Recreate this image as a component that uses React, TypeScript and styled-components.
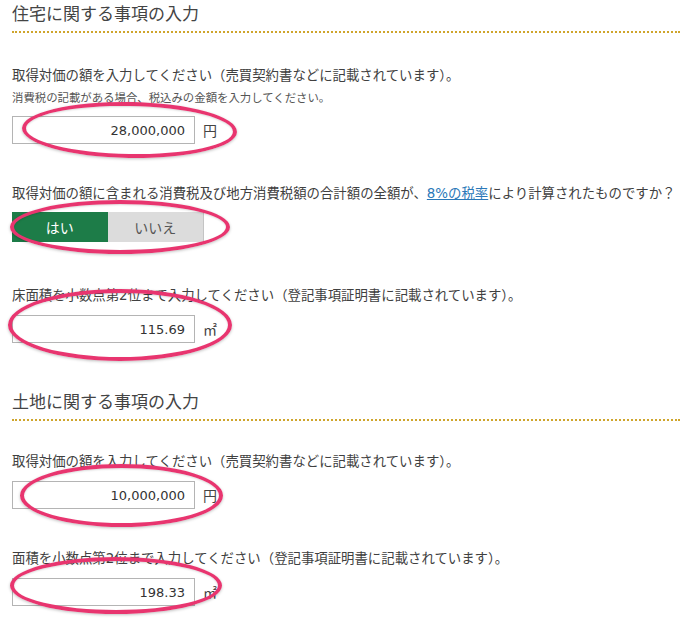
import * as React from 'react';
import styled, { createGlobalStyle } from 'styled-components';

const GlobalStyle = createGlobalStyle`
  html, body {
    margin: 0;
    padding: 0;
    background: #fff;
  }
  body {
    font-family: 'DejaVu Sans', 'Noto Sans CJK JP', sans-serif;
    color: #333;
  }
`;

const Page = styled.div`
  padding: 0 0 0 12px;
  width: 668px;
  overflow: hidden;
  height: 618px;
`;

const Section = styled.section<{ $gap: number }>`
  margin-top: ${({ $gap }) => $gap}px;
`;

const Heading = styled.h2`
  margin: 0;
  font-family: 'Noto Sans CJK JP', sans-serif;
  font-weight: 400;
  font-size: 17px;
  line-height: 26px;
  color: #444;
  padding-bottom: 5px;
  border-bottom: 2px dotted #cfa52c;
`;

const Field = styled.div<{ $gap: number }>`
  margin-top: ${({ $gap }) => $gap}px;
`;

const Label = styled.div`
  font-size: 13.4px;
  line-height: 20px;
  white-space: nowrap;
  color: #404040;
`;

const Note = styled.div`
  margin-top: 4px;
  font-size: 11.4px;
  line-height: 16px;
  color: #555;
  white-space: nowrap;
`;

const LinkText = styled.a`
  color: #2a78b8;
  text-decoration: underline;
`;

const Row = styled.div<{ $gap: number }>`
  position: relative;
  display: flex;
  align-items: center;
  gap: 8px;
  margin-top: ${({ $gap }) => $gap}px;
`;

const Input = styled.div`
  box-sizing: border-box;
  width: 183px;
  height: 28px;
  border: 1px solid #b4b4b4;
  background: #fff;
  display: flex;
  align-items: center;
  justify-content: flex-end;
  padding-right: 9px;
  font-size: 13px;
  color: #333;
`;

const Unit = styled.span`
  font-family: 'Noto Sans CJK JP', sans-serif;
  font-size: 14px;
  color: #444;
`;

const Toggle = styled.div`
  display: flex;
  width: 192px;
  height: 30px;
`;

const ToggleButton = styled.div<{ $active?: boolean }>`
  flex: 1;
  display: flex;
  align-items: center;
  justify-content: center;
  font-family: 'Noto Sans CJK JP', sans-serif;
  font-size: 14px;
  background: ${({ $active }) => ($active ? '#1d7c48' : '#dcdcdc')};
  color: ${({ $active }) => ($active ? '#fff' : '#555')};
  border-right: ${({ $active }) => ($active ? 'none' : '1px solid #c4c4c4')};
`;

const Circle = styled.div<{ $x: number; $y: number; $w: number; $h: number; $r?: number }>`
  position: absolute;
  left: ${({ $x }) => $x}px;
  top: ${({ $y }) => $y}px;
  width: ${({ $w }) => $w}px;
  height: ${({ $h }) => $h}px;
  box-sizing: border-box;
  border: 4px solid #e8356f;
  border-radius: 50%;
  box-shadow: 0 1px 3px rgba(0, 0, 0, 0.25), inset 0 1px 2px rgba(0, 0, 0, 0.15);
  transform: rotate(${({ $r }) => $r ?? 0}deg);
  pointer-events: none;
`;

export default function App() {
  return (
    <>
      <GlobalStyle />
      <Page>
        <Section $gap={0}>
          <Heading>住宅に関する事項の入力</Heading>
          <Field $gap={33}>
            <Label>取得対価の額を入力してください（売買契約書などに記載されています）。</Label>
            <Note>消費税の記載がある場合、税込みの金額を入力してください。</Note>
            <Row $gap={10}>
              <Input>28,000,000</Input>
              <Unit>円</Unit>
              <Circle $x={10} $y={-14} $w={215} $h={56} $r={1} />
            </Row>
          </Field>
          <Field $gap={40}>
            <Label>
              取得対価の額に含まれる消費税及び地方消費税額の合計額の全額が、<LinkText>8%の税率</LinkText>により計算されたものですか？
            </Label>
            <Row $gap={8}>
              <Toggle>
                <ToggleButton $active>はい</ToggleButton>
                <ToggleButton>いいえ</ToggleButton>
              </Toggle>
              <Circle $x={-2} $y={-12} $w={220} $h={54} />
            </Row>
          </Field>
          <Field $gap={44}>
            <Label>床面積を小数点第2位まで入力してください（登記事項証明書に記載されています）。</Label>
            <Row $gap={9}>
              <Input>115.69</Input>
              <Unit>㎡</Unit>
              <Circle $x={-4} $y={-26} $w={224} $h={72} />
            </Row>
          </Field>
        </Section>
        <Section $gap={45}>
          <Heading>土地に関する事項の入力</Heading>
          <Field $gap={31}>
            <Label>取得対価の額を入力してください（売買契約書などに記載されています）。</Label>
            <Row $gap={9}>
              <Input>10,000,000</Input>
              <Unit>円</Unit>
              <Circle $x={8} $y={-17} $w={203} $h={63} />
            </Row>
          </Field>
          <Field $gap={40}>
            <Label>面積を小数点第2位まで入力してください（登記事項証明書に記載されています）。</Label>
            <Row $gap={9}>
              <Input>198.33</Input>
              <Unit>㎡</Unit>
              <Circle $x={-2} $y={-21} $w={212} $h={57} />
            </Row>
          </Field>
        </Section>
      </Page>
    </>
  );
}
